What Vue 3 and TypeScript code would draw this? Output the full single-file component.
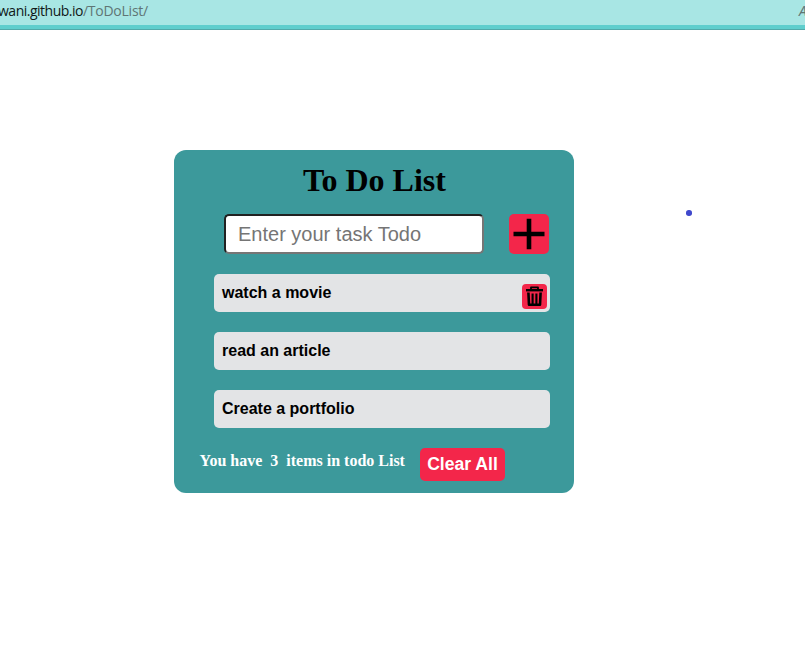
<script setup lang="ts">
import { computed, ref } from 'vue'

interface Task {
  id: number
  title: string
  active: boolean
}

const draft = ref('')
const tasks = ref<Task[]>([
  { id: 1, title: 'watch a movie', active: true },
  { id: 2, title: 'read an article', active: false },
  { id: 3, title: 'Create a portfolio', active: false },
])
const count = computed(() => tasks.value.length)

function addTask() {
  const title = draft.value.trim()
  if (!title) return
  tasks.value.push({ id: Date.now(), title, active: false })
  draft.value = ''
}

function removeTask(id: number) {
  tasks.value = tasks.value.filter((t) => t.id !== id)
}

function clearAll() {
  tasks.value = []
}
</script>

<template>
  <div class="window">
    <header class="address-bar">
      <div class="url"><span class="host">wani.github.io</span><span class="path">/ToDoList/</span></div>
      <span class="reader">A</span>
    </header>
    <main class="page">
      <section class="card">
        <h1>To Do List</h1>
        <form class="entry" @submit.prevent="addTask">
          <input v-model="draft" type="text" placeholder="Enter your task Todo" />
          <button class="add" type="submit" aria-label="Add">
            <svg width="40" height="40" viewBox="0 0 40 40">
              <path d="M20 4.7V35.3M4.5 20H35.5" stroke="#000" stroke-width="4.6" fill="none" />
            </svg>
          </button>
        </form>
        <ul class="tasks">
          <li v-for="task in tasks" :key="task.id">
            <span>{{ task.title }}</span>
            <button v-if="task.active" class="remove" aria-label="Delete" @click="removeTask(task.id)">
              <svg width="25" height="25" viewBox="0 0 25 25" fill="none" stroke="#000">
                <path d="M4 6.2H21" stroke-width="2.4" />
                <path d="M9 5.4V3.4H16V5.4" stroke-width="1.8" stroke-linejoin="round" />
                <path d="M6.4 8.5L7 20.7H18L18.6 8.5" stroke-width="2.6" stroke-linejoin="round" />
                <path d="M10.6 9.5V20M14.4 9.5V20" stroke-width="2.1" />
              </svg>
            </button>
          </li>
        </ul>
        <footer class="summary">
          <p>You have&nbsp; {{ count }} &nbsp;items in todo List</p>
          <button class="clear" @click="clearAll">Clear All</button>
        </footer>
      </section>
      <span class="pointer"></span>
    </main>
  </div>
</template>

<style>
body {
  margin: 0;
  background: #fff;
  overflow: hidden;
}
</style>

<style scoped>
.window {
  height: 654px;
  display: flex;
  flex-direction: column;
  overflow: hidden;
}
.address-bar {
  box-sizing: border-box;
  height: 30px;
  flex: none;
  display: flex;
  justify-content: space-between;
  background: linear-gradient(#a8e6e4 0 25px, #5fcecd 25px 29px, #52a9a9 29px);
  font: 14px/21px "Open Sans", "Noto Sans", sans-serif;
  white-space: nowrap;
}
.url {
  margin-left: -2px;
}
.host {
  color: #101818;
  letter-spacing: -0.5px;
}
.path {
  color: #5f7575;
  letter-spacing: -0.25px;
}
.reader {
  width: 6px;
  color: #5f7575;
  font-style: italic;
}
.page {
  position: relative;
  flex: 1;
  padding: 120px 0 0 174px;
}
.card {
  box-sizing: border-box;
  width: 400px;
  height: 343px;
  padding-top: 12px;
  border-radius: 12px;
  background: #3c999b;
}
h1 {
  margin: 0;
  padding-left: 1px;
  font: bold 32px/37px "Liberation Serif", serif;
  text-align: center;
}
.entry {
  display: flex;
  gap: 25px;
  margin: 15px 0 0 50px;
}
input {
  box-sizing: border-box;
  width: 260px;
  height: 40px;
  padding: 1px 12px;
  border: 2px inset #767676;
  border-radius: 5px;
  background: #fff;
  font: 20px "Liberation Sans", sans-serif;
}
input::placeholder {
  color: #757575;
}
button {
  padding: 0;
  border: 0;
  border-radius: 5px;
  background: #f3264a;
}
svg {
  display: block;
}
.add {
  width: 40px;
  height: 40px;
}
.tasks {
  display: flex;
  flex-direction: column;
  gap: 20px;
  margin: 20px 24px 0 40px;
  padding: 0;
  list-style: none;
}
.tasks li {
  box-sizing: border-box;
  display: flex;
  justify-content: space-between;
  height: 38px;
  padding: 0 3px 0 8px;
  border-radius: 5px;
  background: #e3e4e6;
  font: bold 16px/37px "Liberation Sans", sans-serif;
}
.remove {
  width: 25px;
  height: 25px;
  margin-top: 10px;
  border-radius: 4px;
}
.summary {
  display: flex;
  gap: 15px;
  margin: 20px 0 0 25px;
}
.summary p {
  box-sizing: border-box;
  width: 206px;
  margin: 4px 0 0;
  padding-left: 0.6px;
  color: #fff;
  font: bold 16px/18px "Liberation Serif", serif;
  white-space: nowrap;
}
.clear {
  width: 85px;
  height: 33px;
  color: #fff;
  font: bold 17.6px/33px "Liberation Sans", sans-serif;
}
.pointer {
  position: absolute;
  left: 686px;
  top: 180px;
  width: 5.5px;
  height: 5.5px;
  border-radius: 50%;
  background: #3f48cc;
}
</style>
